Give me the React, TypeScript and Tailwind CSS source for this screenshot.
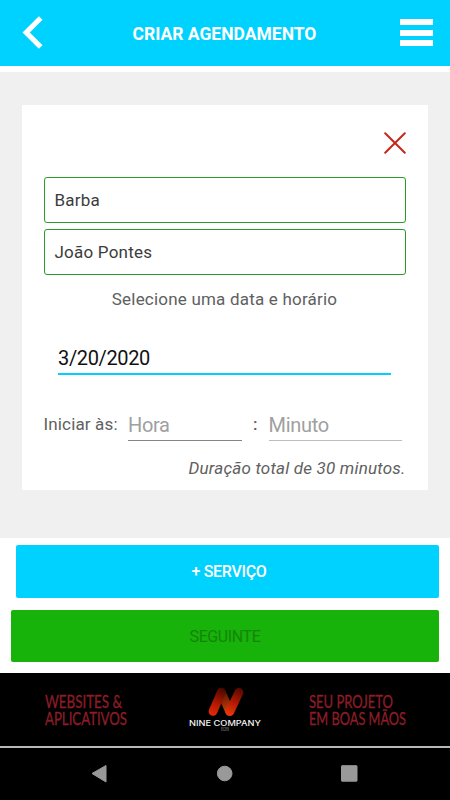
import React from "react";

function Header() {
  return (
    <header className="flex h-[66px] items-center bg-[#00d2ff] text-white">
      <button className="ml-[22px] h-[34px] w-[22px]" aria-label="Voltar">
        <svg width="22" height="34" viewBox="0 0 22 34" fill="none" stroke="#fff" strokeWidth="5.2">
          <path d="M18.7 2L4.2 16.5L18.7 31" />
        </svg>
      </button>
      <h1 className="flex-1 pt-px pl-[5px] text-center text-[17.5px] leading-6 font-bold whitespace-nowrap">CRIAR AGENDAMENTO</h1>
      <button className="mr-[17px] flex w-[33px] flex-col gap-[4.5px] pb-px" aria-label="Menu">
        <span className="h-[6px] bg-white" />
        <span className="h-[6px] bg-white" />
        <span className="h-[6px] bg-white" />
      </button>
    </header>
  );
}

function Field({ children }: { children: string }) {
  return (
    <div className="flex h-[45.5px] items-center rounded-[3px] border border-[#289b28] pt-px pl-[10px] text-[17px] tracking-[0.22px] text-[#3c3c3c]">
      {children}
    </div>
  );
}

function BookingCard() {
  return (
    <section className="mx-[22px] flex h-[385.5px] flex-col bg-white pr-[22.5px] pl-[21.5px] text-[#606060]">
      <button className="mt-[27px] flex h-[23px] justify-end" aria-label="Remover">
        <svg width="23" height="23" viewBox="0 0 23 23" fill="none" strokeLinecap="round">
          <path d="M2.2 1.2L21.8 20.8M21.8 1.2L2.2 20.8" stroke="#c5271b" strokeWidth="2" />
        </svg>
      </button>
      <div className="mt-[22.5px] flex flex-col gap-[6.5px]">
        <Field>Barba</Field>
        <Field>João Pontes</Field>
      </div>
      <p className="mt-[12px] text-center text-[17px] leading-6 tracking-[0.2px]">Selecione uma data e horário</p>
      <div className="mr-[14.5px] ml-[14.5px] mt-[34.5px] h-[29.5px] border-b-2 border-[#00cfff] pt-px text-[20px] leading-6 tracking-[-0.36px] text-[#111]">3/20/2020</div>
      <div className="mt-[37px] flex h-[29px] text-[17px] leading-6 tracking-[0.15px]">
        <span className="w-[84.5px] whitespace-nowrap">Iniciar às:</span>
        <span className="h-[29px] w-[114px] border-b border-[#858585] pt-px text-[20px] tracking-[-0.35px] text-[#a0a0a0]">Hora</span>
        <span className="w-[26.5px] pl-[11px] font-medium">:</span>
        <span className="h-[29px] w-[133px] border-b border-[#bdbdbd] pt-px text-[20px] tracking-[-0.3px] text-[#a0a0a0]">Minuto</span>
      </div>
      <p className="mt-[15px] text-right text-[17px] leading-6 tracking-[0.19px] whitespace-nowrap italic">Duração total de 30 minutos.</p>
    </section>
  );
}

function NineLogo() {
  return (
    <svg width="76" height="50" viewBox="0 0 76 50">
      <defs>
        <linearGradient id="left" gradientUnits="userSpaceOnUse" x1="25" y1="31" x2="36" y2="5">
          <stop offset="0" stopColor="#e62808" />
          <stop offset="0.45" stopColor="#ae1800" />
          <stop offset="1" stopColor="#4a0700" />
        </linearGradient>
        <linearGradient id="middle" gradientUnits="userSpaceOnUse" x1="34" y1="6" x2="43" y2="30">
          <stop offset="0" stopColor="#4b0900" />
          <stop offset="1" stopColor="#d84a08" />
        </linearGradient>
        <linearGradient id="right" gradientUnits="userSpaceOnUse" x1="42" y1="31" x2="54" y2="5">
          <stop offset="0" stopColor="#ea380c" />
          <stop offset="0.5" stopColor="#ae1800" />
          <stop offset="1" stopColor="#540900" />
        </linearGradient>
      </defs>
      <g fill="none" strokeLinecap="round" strokeWidth="8.8">
        <path d="M34.3 8.2L42.6 27.4" stroke="url(#middle)" />
        <path d="M26 27.4L34.3 8.2" stroke="url(#left)" />
        <path d="M43 27.4L52 8.2" stroke="url(#right)" />
      </g>
      <text x="2" y="41.5" textLength="72" lengthAdjust="spacingAndGlyphs" fill="#f4f4f4" fontSize="7" fontWeight="500" fontFamily="Inter, sans-serif">NINE COMPANY</text>
      <text x="34" y="46.6" textLength="8" lengthAdjust="spacingAndGlyphs" fill="#888" fontSize="4.2" fontFamily="Inter, sans-serif">B2B</text>
    </svg>
  );
}

function Banner() {
  return (
    <aside className="flex h-[73.5px] bg-black pt-[11px]">
      <svg width="187" height="48" viewBox="0 0 187 48" fill="#8c1d27" stroke="#8c1d27" strokeWidth="0.35" fontSize="18" fontFamily="Lato, sans-serif">
        <text x="45" y="24" textLength="77" lengthAdjust="spacingAndGlyphs">WEBSITES &amp;</text>
        <text x="45" y="41" textLength="82" lengthAdjust="spacingAndGlyphs">APLICATIVOS</text>
      </svg>
      <NineLogo />
      <svg width="187" height="48" viewBox="263 0 187 48" fill="#8c1d27" stroke="#8c1d27" strokeWidth="0.35" fontSize="18" fontFamily="Lato, sans-serif">
        <text x="309" y="24" textLength="84" lengthAdjust="spacingAndGlyphs">SEU PROJETO</text>
        <text x="309" y="41" textLength="97" lengthAdjust="spacingAndGlyphs">EM BOAS MÃOS</text>
      </svg>
    </aside>
  );
}

function SystemNav() {
  return (
    <nav className="h-[54px] border-t-2 border-[#b8b8b8] bg-black">
      <svg width="450" height="52" viewBox="0 0 450 52" fill="#999" stroke="#999" strokeLinejoin="round">
        <path d="M92 25.5L106 17.5V34Z" />
        <circle cx="224.7" cy="25.5" r="7.3" />
        <rect x="341.5" y="17.7" width="15.5" height="15.5" rx=".5" />
      </svg>
    </nav>
  );
}

export default function App() {
  return (
    <div className="flex h-[800px] w-[450px] flex-col overflow-hidden bg-white font-['Roboto',sans-serif]">
      <Header />
      <main className="mt-[6px] h-[466px] bg-[#f0f0f0] pt-[32.5px]">
        <BookingCard />
      </main>
      <div className="flex h-[134.5px] flex-col pt-[7px] pr-[11px] pl-[11px] text-[16px] font-medium">
        <button className="ml-[5px] h-[52.5px] rounded-[2px] bg-[#00d2ff] pt-px pl-[3px] tracking-[-0.3px] text-white">+ SERVIÇO</button>
        <button className="mt-[12.5px] h-[52px] rounded-[2px] bg-[#17b20a] pt-px font-normal tracking-[-0.4px] text-[#158509]">SEGUINTE</button>
      </div>
      <Banner />
      <SystemNav />
    </div>
  );
}
